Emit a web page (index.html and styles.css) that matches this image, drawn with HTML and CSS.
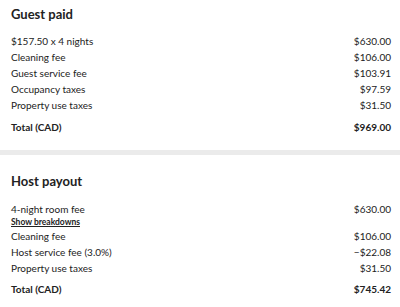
FILE: index.html
```html
<!DOCTYPE html>
<html lang="en">
<head>
<meta charset="utf-8">
<title>Payout details</title>
<link rel="stylesheet" href="styles.css">
</head>
<body>
  <section class="card card-top">
    <h2 class="card-title">Guest paid</h2>
    <div class="rows">
      <div class="row"><span>$157.50 x 4 nights</span><span>$630.00</span></div>
      <div class="row"><span>Cleaning fee</span><span>$106.00</span></div>
      <div class="row"><span>Guest service fee</span><span>$103.91</span></div>
      <div class="row"><span>Occupancy taxes</span><span>$97.59</span></div>
      <div class="row"><span>Property use taxes</span><span>$31.50</span></div>
    </div>
    <div class="row total"><span>Total (CAD)</span><span>$969.00</span></div>
  </section>
  <div class="divider"></div>
  <section class="card card-bottom">
    <h2 class="card-title">Host payout</h2>
    <div class="rows">
      <div class="row row-multi">
        <div class="label-stack">
          <span class="label-main">4-night room fee</span>
          <a class="link" href="#">Show breakdowns</a>
        </div>
        <span class="label-main">$630.00</span>
      </div>
      <div class="row"><span>Cleaning fee</span><span>$106.00</span></div>
      <div class="row"><span>Host service fee (3.0%)</span><span>−$22.08</span></div>
      <div class="row"><span>Property use taxes</span><span>$31.50</span></div>
    </div>
    <div class="row total total-bottom"><span>Total (CAD)</span><span>$745.42</span></div>
  </section>
</body>
</html>
```
FILE: styles.css
```css
* { box-sizing: border-box; }

html, body {
  margin: 0;
  padding: 0;
  background: #fff;
}

body {
  font-family: Lato, "Noto Sans", sans-serif;
  color: #222;
  font-size: 10px;
}

.card {
  padding: 0 9px 0 11px;
}

.card-top {
  padding-top: 4px;
  padding-bottom: 15px;
}

.card-bottom {
  padding-top: 16px;
}

.card-title {
  margin: 0;
  font-size: 13px;
  line-height: 20px;
  font-weight: 700;
}

.card-top .card-title { margin-bottom: 9px; }
.card-bottom .card-title { margin-bottom: 10px; }

.rows {
  display: flex;
  flex-direction: column;
}

.row {
  display: flex;
  justify-content: space-between;
  align-items: flex-start;
  line-height: 16px;
}

.label-stack {
  display: flex;
  flex-direction: column;
}

.row-multi .label-main {
  line-height: 14px;
  padding-top: 1px;
}

.link {
  color: #222;
  font-size: 8.5px;
  font-weight: 700;
  line-height: 12px;
  text-decoration: underline;
}

.total {
  margin-top: 6px;
  font-weight: 700;
}

.total-bottom { margin-top: 5px; }

.divider {
  height: 5px;
  background: #ebebeb;
}
```
